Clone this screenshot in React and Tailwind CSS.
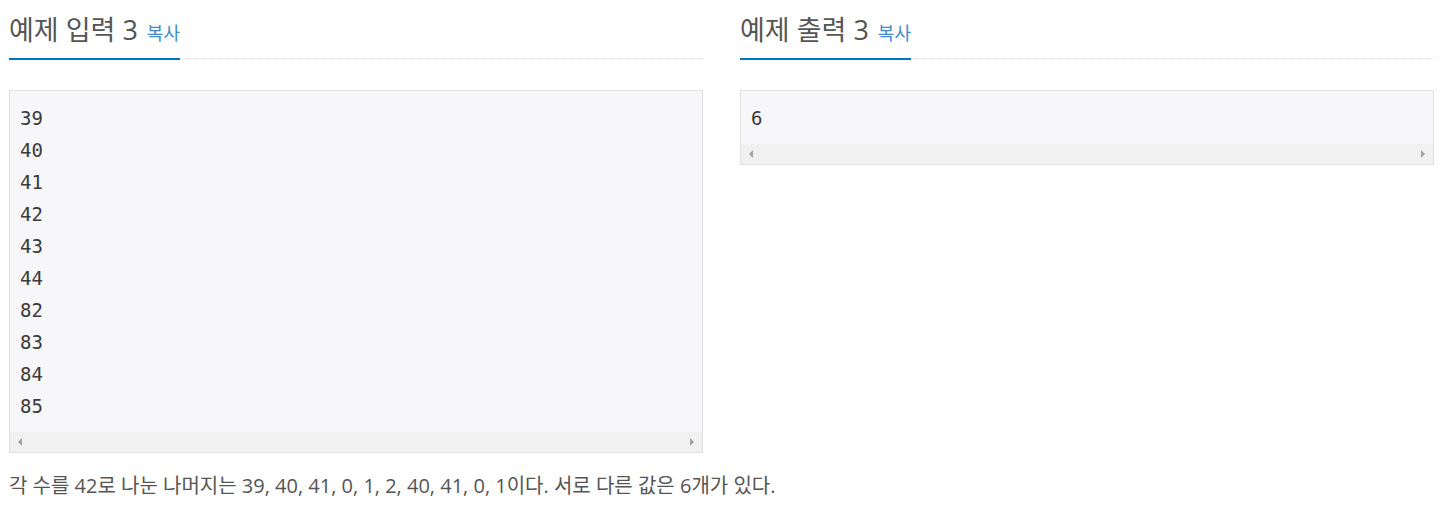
import React from "react";

const sans = "font-['Open_Sans','Noto_Sans_CJK_KR',sans-serif]";
const mono = "font-['DejaVu_Sans_Mono',monospace]";

const ScrollBar = () => (
  <div className="h-[20px] bg-[#f1f1f1] flex items-center justify-between px-[8px]">
    <svg width="4" height="8" viewBox="0 0 4 8">
      <path d="M4 0 L0 4 L4 8 Z" fill="#a3a3a3" />
    </svg>
    <svg width="4" height="8" viewBox="0 0 4 8">
      <path d="M0 0 L4 4 L0 8 Z" fill="#a3a3a3" />
    </svg>
  </div>
);

const SampleBox = ({ title, lines }) => (
  <div className="w-[694px]">
    {/* headline */}
    <div className="flex items-end">
      <h2 className={`${sans} h-[60px] pt-[14px] flex items-baseline gap-[9px] border-b-2 border-[#0076c0] whitespace-nowrap`}>
        <span className="text-[27px] leading-[32px] text-[#555]">{title}</span>
        <span className="text-[18px] leading-[32px] text-[#428bca]">복사</span>
      </h2>
      <div className="flex-1 border-b border-dotted border-[#ddd] mb-[1px]" />
    </div>

    <div className="mt-[30px] border border-[#e1e1e8] bg-[#f7f7f9]">
      <pre className={`${mono} text-[19px] leading-[32px] text-[#3a3a3a] px-[10px] pt-[11px] pb-[9.5px]`}>
        {lines.join("\n")}
      </pre>
      <ScrollBar />
    </div>
  </div>
);

const App = () => {
  return (
    <div className="bg-white min-h-screen pl-[9px]">
      <div className="flex gap-[37px] items-start">
        <SampleBox
          title="예제 입력 3"
          lines={["39", "40", "41", "42", "43", "44", "82", "83", "84", "85"]}
        />
        <SampleBox title="예제 출력 3" lines={["6"]} />
      </div>

      <p className={`${sans} text-[20px] leading-[28px] text-[#555] mt-[19px]`}>
        각 수를 42로 나눈 나머지는 39, 40, 41, 0, 1, 2, 40, 41, 0, 1이다. 서로 다른 값은 6개가 있다.
      </p>
    </div>
  );
};

export default App;
